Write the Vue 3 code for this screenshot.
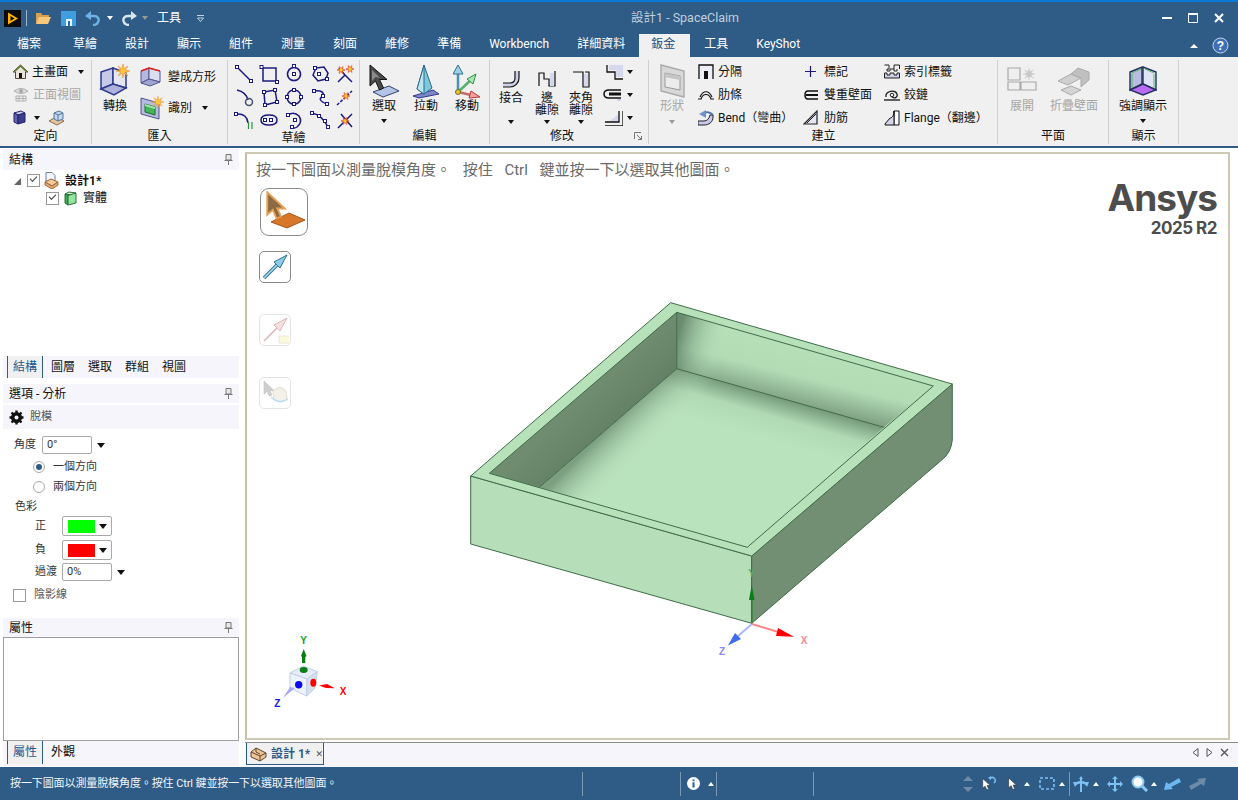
<script setup>
// ribbon tabs
const tabs = ['檔案', '草繪', '設計', '顯示', '組件', '測量', '刻面', '維修', '準備', 'Workbench', '詳細資料', '鈑金', '工具', 'KeyShot']

// star burst used on several ribbon icons
const burst = (cx, cy, r1, r2, n = 8) => {
  const pts = []
  for (let i = 0; i < n * 2; i++) {
    const r = i % 2 ? r2 : r1
    const a = (Math.PI * i) / n
    pts.push(`${(cx + r * Math.cos(a)).toFixed(1)},${(cy + r * Math.sin(a)).toFixed(1)}`)
  }
  return pts.join(' ')
}

// sketch tool grid, 20x20 boxes
const sketchTools = [
  { d: 'M3 3L17 17', pts: [[3, 3], [17, 17]] },
  { d: 'M4 4H17V17H4Z', pts: [[2.5, 3], [18, 18]] },
  { d: 'M10 3.5a6.5 6.5 0 1 0 .01 0', pts: [[10, 10], [10, 2]] },
  { d: 'M6 4L14 3L18 9L16 15L8 17L3 11Z', pts: [[9, 10], [17, 15], [5, 4]] },
  { d: 'M3 18L10 11L17 18M4 4L10 11', stroke: '#1a1a80', fire: [[6, 6], [15, 5]] },
  { d: 'M3 3Q12 5 14 13', pts: [], ring: [15, 15] },
  { d: 'M5 5L16 3L18 15L6 18Z', pts: [[5, 5], [16, 3], [18, 15], [6, 18]] },
  { d: 'M10 3a7 7 0 1 0 .01 0', pts: [[10, 3], [3, 10], [17, 10], [10, 17]] },
  { d: 'M4 4Q15 3 13 9Q6 13 17 17', pts: [[4, 4], [13, 9], [17, 17]] },
  { d: 'M2 18L17 4', dash: true, fire: [[11, 9]] },
  { d: 'M2 4Q13 3 14 13', pts: [[2, 4]], green: true },
  { d: 'M10 5c5 0 8 2 8 5s-3 5-8 5s-8-2-8-5s3-5 8-5Z', pts: [[6, 10], [12, 10]] },
  { d: 'M4 5Q10 1 15 6Q19 12 13 17Q10 19 8 17', pts: [[4, 5], [8, 17], [11, 10]] },
  { d: 'M2 3Q12 5 18 17', pts: [[2, 3], [9, 6], [15, 11], [18, 17]] },
  { d: 'M3 18L17 4M6 4L17 17', fire: [[10, 11]] },
]

const leftTabs = ['圖層', '選取', '群組', '視圖']
</script>

<template>
  <div class="app">
    <!-- shared shapes -->
    <svg class="defs" width="0" height="0">
      <defs>
        <symbol id="cursor" viewBox="0 0 20 24">
          <path d="M3 1V19L7.5 15L10.5 22L14 20.5L11 14H17Z" />
        </symbol>
        <linearGradient id="wallL" x1="0" x2="1" y1="0" y2="1">
          <stop offset="0" stop-color="#7d947d" />
          <stop offset="0.5" stop-color="#6f8c70" />
          <stop offset="1" stop-color="#4d6650" />
        </linearGradient>
        <linearGradient id="wallBack" gradientUnits="userSpaceOnUse" x1="786" y1="335" x2="770" y2="400">
          <stop offset="0" stop-color="#b6e0b8" />
          <stop offset="0.55" stop-color="#b3dcb5" />
          <stop offset="1" stop-color="#7d9e80" />
        </linearGradient>
        <linearGradient id="wallBackL" gradientUnits="userSpaceOnUse" x1="677" y1="340" x2="720" y2="352">
          <stop offset="0" stop-color="#52705a" stop-opacity="0.75" />
          <stop offset="1" stop-color="#b6e0b8" stop-opacity="0" />
        </linearGradient>
        <linearGradient id="floorShade" gradientUnits="userSpaceOnUse" x1="780" y1="398" x2="768" y2="440">
          <stop offset="0" stop-color="#769a7b" />
          <stop offset="0.45" stop-color="#b0dab3" />
          <stop offset="1" stop-color="#b9e3bc" />
        </linearGradient>
        <linearGradient id="floorShadeL" gradientUnits="userSpaceOnUse" x1="608" y1="428" x2="638" y2="458">
          <stop offset="0" stop-color="#6d8d72" stop-opacity="0.8" />
          <stop offset="1" stop-color="#b9e3bc" stop-opacity="0" />
        </linearGradient>
      </defs>
    </svg>

    <!-- title bar -->
    <header class="titlebar">
      <div class="quick">
        <svg class="logo" width="17" height="17" viewBox="0 0 17 17">
          <rect width="17" height="17" fill="#0c0c0c" />
          <path d="M4 2.5L14 8.5L4 14.5Z" fill="#ffb400" />
          <path d="M6.5 6V11L10.5 8.5Z" fill="#0c0c0c" />
        </svg>
        <span class="qsep"></span>
        <svg width="16" height="14" viewBox="0 0 16 14">
          <path d="M1 2H6L7.5 4H14V6H4L1 13Z" fill="#d99f4d" />
          <path d="M3.5 6H16L13 13H1Z" fill="#f6c67a" />
        </svg>
        <svg class="save" width="15" height="15" viewBox="0 0 15 15">
          <path d="M0 0H15V15H0Z" fill="#3f9ee0" />
          <path d="M5 8H11V15H5Z" fill="#e8f3fb" />
          <path d="M7 10H9V15H7Z" fill="#2c6fa8" />
        </svg>
        <svg class="undo" width="16" height="15" viewBox="0 0 16 15">
          <path d="M3 5H9C13 5 14 8 13.5 10C13 12 11 14 8 14" fill="none" stroke="#6db3e8" stroke-width="2.4" />
          <path d="M6 0V9L0 5Z" fill="#6db3e8" />
        </svg>
        <i class="caret white qcaret"></i>
        <svg class="redo" width="16" height="15" viewBox="0 0 16 15">
          <path d="M13 5H7C3 5 2 8 2.500 10C3 12 5 14 8 14" fill="none" stroke="#d8e4ee" stroke-width="2.400" />
          <path d="M10 0V9L16 5Z" fill="#d8e4ee" />
        </svg>
        <i class="caret grey qcaret2"></i>
        <span class="qtext">工具</span>
        <svg class="qmore" width="7" height="7" viewBox="0 0 7 7">
          <path d="M0 .5H7M.5 3L3.500 6.500L6.500 3Z" fill="none" stroke="#c6d2de" />
        </svg>
      </div>
      <div class="doc-title">設計1 - SpaceClaim</div>
      <div class="win">
        <svg width="10" height="10" viewBox="0 0 10 10"><path d="M0 5H10" stroke="#fff" stroke-width="2" /></svg>
        <svg width="10" height="10" viewBox="0 0 10 10"><path d="M.5 1.500H9.500V9.500H.5Z" fill="none" stroke="#fff" /><path d="M0 1H10" stroke="#fff" stroke-width="2" /></svg>
        <svg width="10" height="10" viewBox="0 0 10 10"><path d="M1 1L9 9M9 1L1 9" stroke="#fff" stroke-width="2" /></svg>
      </div>
    </header>

    <!-- tabs -->
    <nav class="tabs">
      <span v-for="t in tabs" :key="t" class="tab" :class="{ active: t === '鈑金', first: t === '檔案' }">{{ t }}</span>
      <div class="tab-tools">
        <i class="caret-up"></i>
        <svg width="17" height="17" viewBox="0 0 17 17">
          <circle cx="8.500" cy="8.500" r="7.500" fill="#3f6fb5" stroke="#c9d6e6" />
          <text x="8.500" y="13" text-anchor="middle" class="help">?</text>
        </svg>
      </div>
    </nav>

    <!-- ribbon -->
    <section class="ribbon">
      <div class="group g1">
        <div class="g-body col">
          <div class="srow">
            <svg width="15" height="15" viewBox="0 0 15 15">
              <path d="M7.500 1L0 8H2.500V14.500H12.500V8H15Z" fill="#e8e4d8" stroke="#5a4632" />
              <path d="M7.500 1L0 8H2L7.500 3L13 8H15Z" fill="#5b7a32" />
              <path d="M6 9H9V14H6Z" fill="#111" />
            </svg>
            <span class="t t-home">主畫面</span>
            <i class="caret c-home"></i>
          </div>
          <div class="srow dim">
            <svg width="16" height="15" viewBox="0 0 16 15">
              <path d="M1 4Q8 -1 15 4Q8 9 1 4Z" fill="#ddd" stroke="#b0b0b0" />
              <circle cx="8" cy="4" r="2" fill="#aaa" />
              <path d="M3 9H13V14H3ZM3 11.500H13M6 9V14M10 9V14" fill="none" stroke="#b0b0b0" />
            </svg>
            <span class="t">正面視圖</span>
          </div>
          <div class="srow">
            <svg width="13" height="15" viewBox="0 0 13 15">
              <path d="M1 3L8 1L12 3L5 5Z" fill="#c9cbeb" stroke="#23236e" />
              <path d="M1 3L5 5V14L1 12Z" fill="#6265ae" stroke="#23236e" />
              <path d="M5 5L12 3V12L5 14Z" fill="#3a3d8d" stroke="#23236e" />
            </svg>
            <i class="caret c-cube"></i>
            <svg class="view-ico" width="17" height="16" viewBox="0 0 17 16">
              <path d="M1 11L8 7L16 11L9 15Z" fill="#e7c79f" stroke="#8b6b46" />
              <path d="M6 3L11 1L15 3V9L10 11L6 9Z" fill="#c5d6ee" stroke="#54729c" />
              <path d="M6 3L10 5V11M10 5L15 3" fill="none" stroke="#54729c" />
            </svg>
          </div>
        </div>
        <div class="g-label">定向</div>
      </div>

      <div class="group g2">
        <div class="g-body">
          <div class="big b-convert">
            <svg class="b-ico" width="32" height="32" viewBox="0 0 32 32">
              <path d="M2 7L14 3V19L2 24Z" fill="#c6c9e8" stroke="#2e3a8e" stroke-width="1.500" />
              <path d="M14 3L27 8V23L14 19Z" fill="#e6e7f6" stroke="#2e3a8e" stroke-width="1.500" />
              <path d="M2 24L14 19L27 23L15 30Z" fill="#aeb2dc" stroke="#2e3a8e" stroke-width="1.500" />
              <polygon :points="burst(24, 6, 7, 2.500)" fill="#ffc83c" stroke="#e8801c" stroke-width=".5" />
            </svg>
            <span class="t">轉換</span>
          </div>
          <div class="col g2-col">
            <div class="srow h-square">
              <svg width="21" height="21" viewBox="0 0 21 21">
                <path d="M1 5L9 2V13L1 17Z" fill="#b4b8dc" stroke="#50558f" />
                <path d="M9 2L20 5V16L9 13Z" fill="#dcdef0" stroke="#50558f" />
                <path d="M1 17L9 13L20 16L10 20Z" fill="#a0a5d0" stroke="#50558f" />
                <path d="M1 5L9 2L20 5" fill="none" stroke="#e02020" stroke-width="1.400" />
              </svg>
              <span class="t">變成方形</span>
            </div>
            <div class="srow h-ident">
              <svg width="24" height="24" viewBox="0 0 24 24">
                <path d="M1 2L19 7V23L1 18Z" fill="#b7bbdc" stroke="#50558f" />
                <path d="M5 8L15 11V19L5 16Z" fill="#44b657" stroke="#1f6e2f" />
                <path d="M5 8L15 11V13L5 10Z" fill="#a4e6ae" />
                <polygon :points="burst(18, 6, 6, 2.200)" fill="#ffc83c" stroke="#e8801c" stroke-width=".4" />
              </svg>
              <span class="t">識別</span>
              <i class="caret c-ident"></i>
            </div>
          </div>
        </div>
        <div class="g-label">匯入</div>
      </div>

      <div class="group g3">
        <div class="g-body sketch-grid">
          <svg v-for="(s, i) in sketchTools" :key="i" width="20" height="20" viewBox="0 0 20 20">
            <path :d="s.d" fill="none" stroke="#1a1a80" stroke-width="1.500" :stroke-dasharray="s.dash ? '3 1.500' : null" />
            <circle v-if="s.ring" :cx="s.ring[0]" :cy="s.ring[1]" r="3.500" fill="none" stroke="#44506a" stroke-width="1.500" />
            <path v-if="s.green" d="M14.500 12V19M18 12V19" stroke="#2f8f4a" stroke-width="1.200" />
            <rect v-for="(p, j) in s.pts || []" :key="j" :x="p[0] - 1.500" :y="p[1] - 1.500" width="3" height="3" fill="#fff" stroke="#1a1a80" />
            <polygon v-for="(p, j) in s.fire || []" :key="'f' + j" :points="burst(p[0], p[1], 4, 1.600, 6)" fill="#ffcf2e" stroke="#e22a1a" stroke-width=".6" />
          </svg>
        </div>
        <div class="g-label">草繪</div>
      </div>

      <div class="group g4">
        <div class="g-body">
          <div class="big w-select">
            <svg class="b-ico" width="34" height="34" viewBox="0 0 34 34">
              <path d="M6 28L22 22L32 27L16 33Z" fill="#b4c4e4" stroke="#33416e" />
              <path d="M3 1V22L8.500 17L12.500 26L16.500 24L12.500 15.500H20Z" fill="#4a4a4a" stroke="#111" />
              <path d="M5 6V17L8.500 13L13 14Z" fill="#8c8c8c" />
            </svg>
            <span class="t">選取</span>
            <i class="caret c-below"></i>
          </div>
          <div class="big w-pull">
            <svg class="b-ico" width="30" height="34" viewBox="0 0 30 34">
              <path d="M2 32L22 26L28 30L8 34Z" fill="#7d88c8" stroke="#2e3a8e" />
              <path d="M13 1L21 24L13 30L6 25Z" fill="#7cc8dc" stroke="#2a6a8a" />
              <path d="M13 1L13 30L6 25Z" fill="#bce6ef" stroke="#2a6a8a" />
            </svg>
            <span class="t">拉動</span>
          </div>
          <div class="big w-move">
            <svg class="b-ico" width="28" height="34" viewBox="0 0 28 34">
              <path d="M5 28V8" stroke="#4d8fb5" stroke-width="2.500" />
              <path d="M5 1L10 10H0Z" fill="#9cd2e8" stroke="#2f6f92" />
              <path d="M5 28L19 15" stroke="#54b06a" stroke-width="2.500" />
              <path d="M23 10L20 20L14 15Z" fill="#a9e6b5" stroke="#2e8f48" />
              <path d="M5 28L18 31" stroke="#c86a6a" stroke-width="2.500" />
              <path d="M27 33L16 34L18 27Z" fill="#f0a0a0" stroke="#b63c3c" />
              <circle cx="5" cy="28" r="2.500" fill="#e8c43c" stroke="#7a6a14" />
            </svg>
            <span class="t">移動</span>
          </div>
        </div>
        <div class="g-label">編輯</div>
      </div>

      <div class="group g5">
        <div class="g-body">
          <div class="big mod m-join">
            <svg class="m-ico" width="20" height="20" viewBox="0 0 20 20">
              <path d="M2 18H9C14 18 18 14 18 9V2H14V9C14 12 12 14 9 14H2Z" fill="#cfd1ec" />
              <path d="M2 18H9C14 18 18 14 18 9V2M2 14H9C12 14 14 12 14 9V2" fill="none" stroke="#111" stroke-width="1.200" />
            </svg>
            <span class="t">接合</span>
            <i class="caret c-mod"></i>
          </div>
          <div class="big mod m-gap">
            <svg class="m-ico" width="18" height="20" viewBox="0 0 18 20">
              <path d="M1 17V4H6V10H11V17H17V2" fill="none" stroke="#111" stroke-width="1.200" />
              <path d="M12 4H16V17H12Z" fill="#d6d8f0" />
            </svg>
            <span class="t">邊<br />離隙</span>
            <i class="caret c-mod"></i>
          </div>
          <div class="big mod m-corner">
            <svg class="m-ico" width="18" height="20" viewBox="0 0 18 20">
              <path d="M1 3H11V18H17V3H13" fill="none" stroke="#111" stroke-width="1.200" />
              <path d="M12 5H16V17H12Z" fill="#d6d8f0" />
            </svg>
            <span class="t">夾角<br />離隙</span>
            <i class="caret c-mod"></i>
          </div>
          <div class="col m-col">
            <div class="srow m-row">
              <svg width="20" height="16" viewBox="0 0 20 16">
                <path d="M6 1H20V13H13V6H6Z" fill="#d6d8f0" />
                <path d="M4 1V8H12V15H20" fill="none" stroke="#111" stroke-width="1.300" />
              </svg>
              <i class="caret"></i>
            </div>
            <div class="srow m-row">
              <svg width="20" height="12" viewBox="0 0 20 12">
                <path d="M18 1H6C2 1 1 3 1 5C1 7 2 9 6 9H18" fill="none" stroke="#111" stroke-width="1.500" />
                <path d="M18 5H6" stroke="#111" stroke-width="3" />
                <path d="M14 10H18V12H14Z" fill="#cfd1ec" />
              </svg>
              <i class="caret"></i>
            </div>
            <div class="srow m-row">
              <svg width="20" height="16" viewBox="0 0 20 16">
                <path d="M5 12H16V4Z" fill="#d6d8f0" />
                <path d="M16 1V12H2M20 1V16H2" fill="none" stroke="#111" stroke-width="1.300" />
              </svg>
              <i class="caret"></i>
            </div>
          </div>
        </div>
        <div class="g-label m-label">修改
          <svg class="launcher" width="8" height="8" viewBox="0 0 8 8">
            <path d="M.5 7V.5H7M3 3L7.500 7.500M7.500 4V7.500H4" fill="none" stroke="#777" />
          </svg>
        </div>
      </div>

      <div class="group g6">
        <div class="g-body">
          <div class="big dim s-shape">
            <svg class="b-ico" width="25" height="34" viewBox="0 0 25 34">
              <path d="M1 1L24 7V33L1 27Z" fill="#d8d8d8" stroke="#aaa" stroke-width="1.400" />
              <path d="M5 9L20 12V26L5 23Z" fill="#ececec" stroke="#999" />
              <path d="M5 9L20 12V16L5 13Z" fill="#c4c4c4" />
            </svg>
            <span class="t">形狀</span>
            <i class="caret grey c-shape"></i>
          </div>
          <div class="col s-col1">
            <div class="srow">
              <svg width="16" height="15" viewBox="0 0 16 15">
                <path d="M2 2H14V14H2Z" fill="#eceef8" />
                <path d="M1 15V1H15V15" fill="none" stroke="#111" stroke-width="1.300" />
                <path d="M6 15V7H10V15Z" fill="#111" />
              </svg>
              <span class="t">分隔</span>
            </div>
            <div class="srow">
              <svg width="16" height="10" viewBox="0 0 16 10">
                <path d="M0 9H3C5 3 11 3 13 9H16M2 7C5 0 11 0 14 7" fill="none" stroke="#111" stroke-width="1.200" />
              </svg>
              <span class="t">肋條</span>
            </div>
            <div class="srow">
              <svg width="16" height="16" viewBox="0 0 16 16">
                <path d="M0 15H6C11 15 15 12 15 7V5H12C11 9 9 11 6 11H0Z" fill="#c8c9ee" stroke="#222" />
                <path d="M15 5C11 1 7 2 5 4" fill="none" stroke="#4f6ea8" stroke-width="2" />
                <path d="M1 4L8 0V8Z" fill="#6c93c8" />
              </svg>
              <span class="t">Bend（彎曲）</span>
            </div>
          </div>
          <div class="col s-col2">
            <div class="srow">
              <svg width="15" height="15" viewBox="0 0 15 15"><path d="M7.500 2V13M2 7.500H13" stroke="#1a1a80" stroke-width="1.200" /></svg>
              <span class="t">標記</span>
            </div>
            <div class="srow">
              <svg width="15" height="10" viewBox="0 0 15 10">
                <path d="M15 1H5C1 1 1 9 5 9H15" fill="none" stroke="#111" stroke-width="1.500" />
                <path d="M15 5H3" stroke="#111" stroke-width="2" />
              </svg>
              <span class="t">雙重壁面</span>
            </div>
            <div class="srow">
              <svg width="15" height="15" viewBox="0 0 15 15">
                <path d="M1 14L14 1V14Z" fill="#e6e7f4" stroke="#222" stroke-width="1.200" />
                <path d="M4 13L13 4" stroke="#222" />
              </svg>
              <span class="t">肋筋</span>
            </div>
          </div>
          <div class="col s-col3">
            <div class="srow">
              <svg width="16" height="15" viewBox="0 0 16 15">
                <path d="M.5 1H5V5H3V7H6V5M10 5V1H15.500V5M6 5H10V7H13V5" fill="none" stroke="#222" />
                <path d="M.5 14V9H3V11H6V9H10V11H13V9H15.500V14Z" fill="#cfd0ea" stroke="#222" />
              </svg>
              <span class="t">索引標籤</span>
            </div>
            <div class="srow">
              <svg width="16" height="12" viewBox="0 0 16 12">
                <path d="M2 8C1 2 11 0 13 5C14 8 11 10 8 8" fill="none" stroke="#222" stroke-width="1.300" />
                <circle cx="8" cy="6" r="1.800" fill="none" stroke="#222" />
                <path d="M0 11H16" stroke="#222" stroke-width="1.400" />
              </svg>
              <span class="t">鉸鏈</span>
            </div>
            <div class="srow">
              <svg width="16" height="16" viewBox="0 0 16 16">
                <path d="M10 1H15V15H10Z" fill="#fff" stroke="#111" />
                <path d="M10 1C10 8 6 8 6 8L1 14V15H10Z" fill="#d4d5ea" stroke="#111" />
              </svg>
              <span class="t">Flange（翻邊）</span>
            </div>
          </div>
        </div>
        <div class="g-label s-label">建立</div>
      </div>

      <div class="group g7">
        <div class="g-body">
          <div class="big dim f-open">
            <svg class="b-ico" width="30" height="30" viewBox="0 0 30 30">
              <path d="M1 2H13V14H1ZM1 16H13V24H1ZM14 16H29V24H14Z" fill="#efefef" stroke="#a8a8a8" stroke-width="1.200" />
              <polygon :points="burst(22, 8, 7, 2.500)" fill="#c8c8c8" />
            </svg>
            <span class="t">展開</span>
          </div>
          <div class="big dim f-fold">
            <svg class="b-ico" width="34" height="30" viewBox="0 0 34 30">
              <path d="M1 15L14 8L24 12L11 19Z" fill="#d0d0d0" stroke="#aaa" />
              <path d="M14 8L21 2L32 6V14L24 21V12Z" fill="#c0c0c0" stroke="#aaa" />
              <path d="M4 24L14 20L24 24L14 29Z" fill="#d4d4d4" stroke="#aaa" />
            </svg>
            <span class="t">折疊壁面</span>
          </div>
        </div>
        <div class="g-label">平面</div>
      </div>

      <div class="group g8">
        <div class="g-body">
          <div class="big h-show">
            <svg class="b-ico" width="28" height="30" viewBox="0 0 28 30">
              <path d="M1 6L13 1V18L1 24Z" fill="#b8bce0" stroke="#20305e" stroke-width="1.400" />
              <path d="M14 1L27 6V24L14 18Z" fill="#e0e2f6" stroke="#20305e" stroke-width="1.400" />
              <path d="M1 24L14 18L27 24L14 29Z" fill="#b96cf0" stroke="#20305e" stroke-width="1.400" />
              <path d="M3 7L12 3M16 3L25 7M3 22L3 8M25 22V8" fill="none" stroke="#5cb85c" />
            </svg>
            <span class="t">強調顯示</span>
            <i class="caret c-below"></i>
          </div>
        </div>
        <div class="g-label">顯示</div>
      </div>
    </section>

    <main class="main">
      <aside class="side">
        <div class="p-head h21">結構<svg class="pin" width="9" height="11" viewBox="0 0 9 11"><path d="M2 .5H7V6H2ZM.5 6.500H8.500M4.500 7V11" fill="#e8e8e8" stroke="#777" /></svg></div>
        <div class="tree">
          <div class="t-row r1">
            <i class="tri"></i>
            <i class="chk on"></i>
            <svg class="doc" width="15" height="17" viewBox="0 0 15 17">
              <path d="M2 .5H8L11 3.500V9H2Z" fill="#f4f6fb" stroke="#6b7fa6" />
              <path d="M1 10L7 7L14 10L8 14Z" fill="#f1c99b" stroke="#9c6b3a" />
              <path d="M1 10V13L8 17L14 13V10L8 14Z" fill="#e0a871" stroke="#9c6b3a" />
            </svg>
            <b>設計1*</b>
          </div>
          <div class="t-row r2">
            <i class="chk on"></i>
            <svg class="solid" width="13" height="15" viewBox="0 0 13 15">
              <path d="M1 3L5 1L12 2L8 4Z" fill="#c8f5cc" stroke="#2e6a3a" />
              <path d="M1 3L4 4.500V14L1 12Z" fill="#3fae58" stroke="#2e6a3a" />
              <path d="M4 4.500L12 2V12L4 14Z" fill="#8fe69c" stroke="#2e6a3a" />
            </svg>
            <span>實體</span>
          </div>
        </div>
        <div class="s-tabs h22">
          <span class="s-tab active">結構</span>
          <span v-for="t in leftTabs" :key="t" class="s-tab">{{ t }}</span>
        </div>
        <div class="p-head h19 mt6">選項 - 分析<svg class="pin" width="9" height="11" viewBox="0 0 9 11"><path d="M2 .5H7V6H2ZM.5 6.500H8.500M4.500 7V11" fill="#e8e8e8" stroke="#777" /></svg></div>
        <div class="tool-head">
          <svg width="15" height="15" viewBox="0 0 15 15">
            <circle cx="7.500" cy="7.500" r="4" fill="none" stroke="#111" stroke-width="3" />
            <path d="M7.500 .5V14.500M.5 7.500H14.500M2.500 2.500L12.500 12.500M12.500 2.500L2.500 12.500" stroke="#111" stroke-width="2.400" />
            <circle cx="7.500" cy="7.500" r="2" fill="#f5f5fb" />
          </svg>
          <span>脫模</span>
        </div>
        <div class="form">
          <div class="f-row angle">
            <span class="f-l">角度</span>
            <span class="inp">0°</span>
            <i class="caret big-caret"></i>
          </div>
          <div class="f-radio first-radio"><i class="radio on"></i>一個方向</div>
          <div class="f-radio"><i class="radio"></i>兩個方向</div>
          <div class="f-title">色彩</div>
          <div class="f-row color first-color">
            <span class="f-l2">正</span>
            <span class="swatch"><i class="sw green"></i><i class="caret big-caret"></i></span>
          </div>
          <div class="f-row color second-color">
            <span class="f-l2">負</span>
            <span class="swatch"><i class="sw red"></i><i class="caret big-caret"></i></span>
          </div>
          <div class="f-row color">
            <span class="f-l2">過渡</span>
            <span class="inp">0%</span>
            <i class="caret big-caret"></i>
          </div>
          <div class="f-check"><i class="chk"></i>陰影線</div>
        </div>
        <div class="p-head h19">屬性<svg class="pin" width="9" height="11" viewBox="0 0 9 11"><path d="M2 .5H7V6H2ZM.5 6.500H8.500M4.500 7V11" fill="#e8e8e8" stroke="#777" /></svg></div>
        <div class="prop-box"></div>
        <div class="s-tabs h25">
          <span class="s-tab active">屬性</span>
          <span class="s-tab">外觀</span>
        </div>
      </aside>

      <div class="work">
        <div class="viewport">
          <svg class="scene" viewBox="247 154 981 584">
            <!-- body -->
            <path d="M470.700 476L751.700 556V623.300L470.700 544Z" fill="#b6deb8" stroke="#3f6b49" />
            <path d="M751.700 556L952.300 384V440Q951 453 941.700 460L751.700 623.300Z" fill="#738f73" stroke="#3f6b49" />
            <path d="M470.700 476L670.700 302.700L952.300 384L751.700 556Z" fill="#b7e2b9" stroke="#3f6b49" />
            <path d="M489.300 473.300L676.700 312.300V368.700L539.300 487.300Z" fill="url(#wallL)" />
            <path d="M676.700 312.300L933.300 386L884 427.300L676.700 368.700Z" fill="url(#wallBack)" />
            <path d="M676.700 312.300L933.300 386L884 427.300L676.700 368.700Z" fill="url(#wallBackL)" />
            <path d="M676.700 368.700L884 427.300L747.300 547.300L539.300 487.300Z" fill="url(#floorShade)" />
            <path d="M676.700 368.700L884 427.300L747.300 547.300L539.300 487.300Z" fill="url(#floorShadeL)" />
            <path d="M489.300 473.300L676.700 312.300L933.300 386L747.300 547.300Z" fill="none" stroke="#3f6b49" />
            <path d="M676.700 312.300V368.700L884 427.300M676.700 368.700L539.300 487.300" fill="none" stroke="#3f6b49" />

            <!-- model triad -->
            <path d="M751.700 624V598" stroke="#1f8a2c" stroke-width="1.500" />
            <path d="M751.700 585L754.500 600H749Z" fill="#0b7d16" />
            <text x="751.700" y="577" class="ax" fill="#5aa866" text-anchor="middle">Y</text>
            <path d="M752 624L778 632" stroke="#ff8585" stroke-width="2" />
            <path d="M794 636.700L776 636L778 628Z" fill="#f00" />
            <text x="804" y="644" class="ax" fill="#ff8a8a" text-anchor="middle">X</text>
            <path d="M752 624L738 636" stroke="#a8b8f4" stroke-width="2" />
            <path d="M728 645.500L735 633L741 639Z" fill="#3e6cf0" />
            <text x="722" y="655" class="ax" fill="#8a8af8" text-anchor="middle">Z</text>

            <!-- corner triad -->
            <path d="M303.700 649L306.500 656L305.300 657V663H302V657L301 656Z" fill="#0b7d16" />
            <text x="303.700" y="644" class="ax" fill="#1a9a2a" text-anchor="middle">Y</text>
            <path d="M290 673L303 666L317.300 671.700L307 679Z" fill="#e6ecf8" stroke="#c0cfe6" />
            <path d="M290 673L307 679L306.700 696L290 688Z" fill="#edf2fb" stroke="#c0cfe6" />
            <path d="M307 679L317.300 671.700L315 688L306.700 696Z" fill="#d8e0f0" stroke="#c0cfe6" />
            <ellipse cx="303.700" cy="670" rx="4" ry="3" fill="#0b7d16" />
            <circle cx="298.700" cy="684.700" r="3.700" fill="#0a0aee" />
            <ellipse cx="313.300" cy="682.700" rx="3" ry="4" fill="#f00" />
            <path d="M319 685.500L327 684L335 688.300L326 688Z" fill="#f00" />
            <text x="343" y="695" class="ax" fill="#f00" text-anchor="middle">X</text>
            <path d="M295 688L283 698L290 687Z" fill="#a8a8f4" />
            <text x="277.300" y="707" class="ax" fill="#1a1aee" text-anchor="middle">Z</text>
          </svg>

          <div class="hint">按一下圖面以測量脫模角度。 按住 Ctrl 鍵並按一下以選取其他圖面。</div>

          <div class="brand">
            <div class="brand-name">Ansys</div>
            <div class="brand-ver">2025 R2</div>
          </div>

          <div class="palette">
            <button class="pbtn large">
              <svg width="42" height="42" viewBox="0 0 42 42">
                <path d="M10 33L28 24L44 31L26 39Z" fill="#d8762a" stroke="#a85a1c" transform="translate(-2 -2)" />
                <use href="#cursor" x="0" y="0" width="26" height="30" fill="#8a6a44" stroke="#e8a050" stroke-width="1.500" />
              </svg>
            </button>
            <button class="pbtn">
              <svg width="28" height="28" viewBox="0 0 28 28">
                <path d="M3 25L16 12" stroke="#2f6f92" stroke-width="3.500" />
                <path d="M3 25L16 12" stroke="#a8dcef" stroke-width="1.600" />
                <path d="M26 2L19 15L16.500 12.500L13 9Z" fill="#8ccbe6" stroke="#2f6f92" />
              </svg>
            </button>
            <button class="pbtn faint">
              <svg width="28" height="28" viewBox="0 0 28 28">
                <path d="M3 25L16 12" stroke="#d8b8b8" stroke-width="1.600" />
                <path d="M26 2L19 15L16.500 12.500L13 9Z" fill="#f6e0e0" stroke="#dcb8b8" />
                <path d="M18 20H29V27H18Z" fill="#fbf8dc" stroke="#e8e8d8" />
              </svg>
            </button>
            <button class="pbtn faint">
              <svg width="28" height="28" viewBox="0 0 28 28">
                <use href="#cursor" x="1" y="1" width="14" height="18" fill="#cfcfcf" stroke="#bbb" />
                <path d="M12 12Q19 5 25 12L26 20Q19 26 13 20Z" fill="#f4f1ea" stroke="#e0dcd0" />
                <path d="M10 18Q18 26 27 20" fill="none" stroke="#bcdcf2" stroke-width="1.500" />
              </svg>
            </button>
          </div>
        </div>

        <div class="doc-tabs">
          <div class="doc-tab">
            <svg width="17" height="16" viewBox="0 0 17 16">
              <path d="M1 6L6 2L16 7V11L10 15L1 11Z" fill="#eec396" stroke="#5c4630" />
              <path d="M1 6L10 10V15M10 10L16 7M6 2V6L10 8" fill="none" stroke="#5c4630" />
            </svg>
            <span class="doc-name">設計 1*</span>
            <span class="doc-x">✕</span>
          </div>
          <div class="doc-nav">
            <svg width="7" height="9" viewBox="0 0 7 9"><path d="M6 .5V8.500L1 4.500Z" fill="none" stroke="#555" /></svg>
            <svg width="7" height="9" viewBox="0 0 7 9"><path d="M1 .5V8.500L6 4.500Z" fill="none" stroke="#555" /></svg>
            <svg width="9" height="9" viewBox="0 0 9 9"><path d="M1 1L8 8M8 1L1 8" stroke="#555" stroke-width="1.300" /></svg>
          </div>
        </div>
      </div>
    </main>

    <!-- status bar -->
    <footer class="status">
      <div class="st-msg">按一下圖面以測量脫模角度。按住 Ctrl 鍵並按一下以選取其他圖面。</div>
      <div class="st-cell c1"></div>
      <div class="st-cell c2">
        <svg width="13" height="13" viewBox="0 0 13 13">
          <circle cx="6.500" cy="6.500" r="6.500" fill="#fff" />
          <path d="M5.500 2.500H7.500V4.200H5.500ZM5.500 5.300H7.500V10.500H5.500Z" fill="#1c5f9e" />
        </svg>
        <i class="caret-up small"></i>
      </div>
      <div class="st-cell c3"></div>
      <div class="st-cell c4"></div>
      <div class="st-tools">
        <svg class="updown" width="10" height="16" viewBox="0 0 10 16">
          <path d="M5 0L10 5H0ZM5 16L10 11H0Z" fill="#6e8aa6" />
        </svg>
        <svg width="16" height="15" viewBox="0 0 16 15">
          <use href="#cursor" x="0" y="2" width="11" height="13" fill="#fff" stroke="#222" />
          <path d="M9 2C13 0 16 4 13 7" fill="none" stroke="#7cc0f4" stroke-width="1.500" />
          <path d="M7 2L10 0V4Z" fill="#7cc0f4" />
        </svg>
        <svg class="cur" width="11" height="14" viewBox="0 0 11 14">
          <use href="#cursor" x="0" y="0" width="11" height="14" fill="#fff" stroke="#222" />
        </svg>
        <i class="caret-up small up-cur"></i>
        <svg class="sel" width="16" height="13" viewBox="0 0 16 13">
          <rect x="1" y="1" width="14" height="11" fill="none" stroke="#7cc0f4" stroke-width="1.600" stroke-dasharray="3 2" />
        </svg>
        <i class="caret-up small up-sel"></i>
        <span class="st-sep"></span>
        <svg width="16" height="16" viewBox="0 0 16 16">
          <path d="M7 2H9V16H7Z" fill="#7cc0f4" />
          <path d="M2 10Q2 5 8 5Q14 5 14 10L11 8Q8 7 5 8Z" fill="#7cc0f4" />
          <path d="M0 6L5 6L2 11ZM16 6L11 6L14 11ZM8 0L10 3H6Z" fill="#7cc0f4" />
        </svg>
        <i class="caret-up small up-rot"></i>
        <svg class="pan" width="16" height="16" viewBox="0 0 16 16">
          <path d="M7 3H9V7H13V5L16 8L13 11V9H9V13H11L8 16L5 13H7V9H3V11L0 8L3 5V7H7V3H5L8 0L11 3H9Z" fill="#7cc0f4" />
        </svg>
        <svg class="zoom" width="17" height="17" viewBox="0 0 17 17">
          <circle cx="7" cy="7" r="5.500" fill="#fff" stroke="#8ccaf6" stroke-width="2" />
          <path d="M11 11L16 16" stroke="#8ccaf6" stroke-width="3" />
        </svg>
        <i class="caret-up small up-zoom"></i>
        <svg class="prev" width="17" height="12" viewBox="0 0 17 12">
          <path d="M0 12L2 4L5 6L15 0L17 4L7 9L9 11Z" fill="#6db8f2" />
        </svg>
        <svg class="next" width="17" height="12" viewBox="0 0 17 12">
          <path d="M17 0L15 8L12 6L2 12L0 8L10 3L8 1Z" fill="#6e8aa6" />
        </svg>
      </div>
    </footer>
  </div>
</template>

<style>
html, body { margin: 0; background: #fff; }
</style>

<style scoped>
.app {
  width: 1238px;
  height: 800px;
  display: flex;
  flex-direction: column;
  overflow: hidden;
  font-family: Roboto, "Noto Sans CJK TC", sans-serif;
  font-size: 12px;
  line-height: 14px;
  color: #111;
  background: #fff;
}
.defs { position: absolute; }
i { display: block; font-style: normal; flex: none; }
svg { display: block; flex: none; }

.caret { width: 0; height: 0; border-left: 3.5px solid transparent; border-right: 3.5px solid transparent; border-top: 4px solid #111; }
.caret.white { border-top-color: #fff; }
.caret.grey { border-top-color: #9a9a9a; }
.caret.big-caret { border-left-width: 4px; border-right-width: 4px; border-top-width: 5px; }
.caret-up { width: 0; height: 0; border-left: 4px solid transparent; border-right: 4px solid transparent; border-bottom: 4px solid #fff; }
.caret-up.small { border-left-width: 3.5px; border-right-width: 3.5px; }

/* title */
.titlebar {
  height: 34px;
  box-sizing: border-box;
  border-top: 2px solid #0a78d4;
  background: #2e5c86;
  display: flex;
  align-items: center;
  color: #fff;
}
.quick { display: flex; align-items: center; padding-left: 4px; width: 624px; box-sizing: border-box; height: 100%; }
.qsep { width: 1px; height: 16px; background: #9db4c9; margin: 0 8px 0 5px; }
.save { margin-left: 10px; }
.undo { margin-left: 9px; }
.qcaret { margin-left: 6px; }
.redo { margin-left: 8px; }
.qcaret2 { margin-left: 5px; }
.qtext { font-size: 12px; margin-left: 9px; }
.qmore { margin-left: 16px; }
.doc-title { margin-left: 7px; font-size: 12.5px; color: #c3cfdb; }
.win { margin-left: auto; display: flex; gap: 16px; padding-right: 14px; }

/* tabs */
.tabs { height: 23px; background: #2e5c86; display: flex; align-items: center; color: #fff; padding-left: 3px; }
.tab { padding: 0 14px; height: 23px; line-height: 20px; font-size: 12px; white-space: nowrap; }
.tab.first { padding-right: 18px; }
.tab.active { background: #f0f0f0; color: #1d4e7a; padding: 0 15px 0 12px; }
.tab-tools { margin-left: auto; display: flex; align-items: center; gap: 14px; padding-right: 9px; }

/* ribbon */
.ribbon { height: 91px; box-sizing: border-box; background: #f0f0f0; border-bottom: 2px solid #2e5c86; display: flex; flex: none; }
.group { height: 84px; margin-top: 3px; box-sizing: border-box; border-right: 1px solid #cfcfcf; display: flex; flex-direction: column; position: relative; }
.g-body { height: 68px; display: flex; flex: none; }
.g-label { height: 16px; line-height: 16px; text-align: center; font-size: 12px; }
.g1 { width: 92px; }
.g2 { width: 136px; }
.g3 { width: 132px; }
.g4 { width: 130px; }
.g5 { width: 159px; }
.g6 { width: 349px; }
.g7 { width: 111px; }
.g8 { width: 70px; }
.col { display: flex; flex-direction: column; }
.srow { height: 23px; display: flex; align-items: center; white-space: nowrap; flex: none; }
.t { white-space: nowrap; }
.dim { color: #a6a6a6; }
.big { display: flex; flex-direction: column; align-items: center; text-align: center; flex: none; }
.b-ico { margin-top: 3px; height: 36px; }
.big > .t { line-height: 14px; }
.c-below { margin-top: 6px; }

.g1 .col { padding-left: 13px; }
.g1 .t { margin-left: 4px; }
.c-home { margin-left: 10px; }
.c-cube { margin-left: 8px; }
.view-ico { margin-left: 8px; }

.b-convert { width: 46px; }
.g2-col { margin-left: 2px; padding-top: 4px; }
.h-square { height: 25px; }
.h-square .t { margin-left: 7px; }
.h-ident { height: 24px; margin-top: 7px; }
.h-ident .t { margin-left: 4px; }
.c-ident { margin-left: 10px; }

.sketch-grid { display: grid; grid-template-columns: repeat(5, 20px); grid-auto-rows: 23px; column-gap: 5.2px; padding: 2px 0 0 6px; align-items: center; }

.w-select { width: 42px; margin-left: 3px; }
.w-pull { width: 40px; margin-left: 1px; }
.w-move { width: 40px; margin-left: 1px; }

.mod { width: 36px; height: 68px; }
.mod .t { line-height: 12px; }
.m-ico { margin-top: 9px; margin-bottom: 3px; }
.c-mod { position: absolute; top: 60px; }
.m-join { margin-left: 3px; }
.m-corner { margin-left: -2px; }
.m-col { margin-left: 4px; }
.m-row { gap: 4px; width: 34px; justify-content: flex-start; }
.m-label { position: relative; padding-right: 14px; }
.launcher { position: absolute; right: 6px; top: 4px; }

.s-shape { width: 40px; margin-left: 3px; }
.c-shape { position: absolute; top: 60px; }
.s-col1 { margin-left: 6px; width: 105px; }
.s-col1 .srow { gap: 4px; }
.s-col1 svg { width: 16px; }
.s-col2 { width: 81px; }
.s-col2 .srow { gap: 6px; }
.s-col3 .srow { gap: 4px; }
.s-label { padding-left: 1px; }

.f-open { width: 40px; margin-left: 4px; }
.f-fold { width: 56px; margin-left: 4px; }
.h-show { width: 56px; margin-left: 6px; }

/* left side */
.main { flex: 1; display: flex; min-height: 0; }
.side { width: 245px; padding-top: 1px; padding-left: 3px; box-sizing: border-box; display: flex; flex-direction: column; flex: none; }
.p-head { width: 236px; box-sizing: border-box; padding-left: 6px; background: #f5f5fb; display: flex; align-items: center; justify-content: space-between; padding-right: 6px; flex: none; }
.h21 { height: 21px; }
.h19 { height: 19px; }
.mt6 { margin-top: 6px; }
.tree { height: 186px; flex: none; position: relative; padding-top: 1px; box-sizing: border-box; }
.t-row { display: flex; align-items: center; }
.r1 { height: 19px; padding-left: 11px; }
.r2 { height: 16px; padding-left: 43px; }
.tri { width: 0; height: 0; border-left: 7px solid transparent; border-bottom: 7px solid #666; margin-right: 6px; margin-top: 1px; }
.chk { width: 11px; height: 11px; border: 1px solid #999; background: #fff; position: relative; flex: none; }
.chk.on::after { content: ""; position: absolute; left: 2px; top: 1px; width: 6px; height: 3px; border-left: 1.2px solid #444; border-bottom: 1.2px solid #444; transform: rotate(-45deg); }
.doc { margin-left: 4px; margin-right: 6px; }
.solid { margin-left: 5px; margin-right: 6px; }
.r1 b { font-size: 12px; }
.s-tabs { flex: none; display: flex; align-items: center; width: 236px; box-sizing: border-box; background: #f5f5fb; padding-left: 4px; }
.h22 { height: 22px; }
.h25 { height: 25px; align-items: flex-start; }
.s-tab { padding: 0 7px; margin-right: 8px; line-height: 22px; height: 22px; box-sizing: border-box; }
.s-tab.active { border-left: 1px solid #2e5c86; border-right: 1px solid #2e5c86; color: #1d5a8e; background: #f0f0f0; padding: 0 5px; margin-right: 7px; width: 36px; }
.h22 .s-tab { margin-right: 1px; padding: 0 6px; }
.h22 .s-tab.active { padding: 0 5px; margin-right: 2px; }
.h25 .s-tab.active { height: 23px; margin-right: 1px; }
.tool-head { flex: none; margin-top: 2px; height: 24px; width: 236px; background: #f5f5fb; display: flex; align-items: center; padding-left: 6px; box-sizing: border-box; gap: 6px; font-size: 11px; color: #555; }
.form { height: 189px; flex: none; font-size: 11px; color: #333; box-sizing: border-box; padding-top: 7px; }
.f-row { display: flex; align-items: center; }
.angle { height: 18px; padding-left: 11px; }
.f-l { width: 28px; }
.inp { width: 50px; height: 18px; box-sizing: border-box; border: 1px solid #aaa; border-radius: 2px; background: #fff; line-height: 16px; padding-left: 4px; margin-right: 5px; }
.f-radio { height: 20px; padding-left: 30px; display: flex; align-items: center; gap: 8px; }
.first-radio { margin-top: 3px; }
.radio { width: 10px; height: 10px; border: 1px solid #aaa; border-radius: 50%; position: relative; }
.radio.on::after { content: ""; position: absolute; left: 2px; top: 2px; width: 6px; height: 6px; background: #2e5c86; border-radius: 50%; }
.f-title { height: 20px; line-height: 20px; padding-left: 12px; }
.color { margin-top: 3px; padding-left: 32px; min-height: 18px; }
.first-color { margin-top: -1px; }
.second-color { margin-top: 4px; }
.f-l2 { width: 27px; }
.swatch { width: 50px; height: 20px; box-sizing: border-box; border: 1px solid #aaa; border-radius: 2px; display: flex; align-items: center; padding-left: 5px; gap: 4px; background: #fff; }
.sw { width: 27px; height: 13px; }
.sw.green { background: #0f0; }
.sw.red { background: #f00; }
.f-check { margin-top: 5px; height: 18px; padding-left: 10px; display: flex; align-items: center; gap: 8px; color: #555; }
.prop-box { height: 104px; width: 236px; box-sizing: border-box; border: 1px solid #a0a0a0; flex: none; }

/* work area */
.work { flex: 1; display: flex; flex-direction: column; padding-top: 4px; min-width: 0; }
.viewport { width: 985px; height: 588px; box-sizing: border-box; border: 2px solid #cdc9b2; border-left-color: #c4c0a8; position: relative; overflow: hidden; flex: none; background: #fff; }
.scene { position: absolute; inset: 0; width: 981px; height: 584px; }
.ax { font-size: 10px; font-weight: 700; font-family: "Liberation Sans", sans-serif; }
.hint { position: absolute; left: 9px; top: 7px; font-size: 15px; line-height: 18px; color: #6a6a6a; white-space: nowrap; word-spacing: 8px; }
.brand { position: absolute; right: 11px; top: 24px; text-align: right; color: #4d4d4d; font-family: Inter, sans-serif; font-weight: 700; }
.brand-name { font-size: 37px; line-height: 40px; letter-spacing: -1px; }
.brand-ver { font-size: 17px; line-height: 20px; letter-spacing: -.5px; }
.palette { position: absolute; left: 12px; top: 34px; display: flex; flex-direction: column; gap: 31px; align-items: flex-start; }
.pbtn { width: 32px; height: 32px; padding: 0; box-sizing: border-box; border: 1px solid #8a8a8a; border-radius: 5px; background: #fff; display: flex; align-items: center; justify-content: center; }
.pbtn.large { width: 48px; height: 48px; border-radius: 9px; margin-left: 1px; margin-bottom: -16px; }
.pbtn.faint { border-color: #e4e4e4; }

.doc-tabs { margin-top: 2px; flex: 1; background: #f5f5fb; border-top: 1px solid #8c8c8c; display: flex; justify-content: space-between; align-items: flex-start; padding-right: 8px; }
.doc-tab { width: 78px; height: 22px; margin-left: 1px; box-sizing: border-box; border: 1px solid #2e5c86; border-top: 0; display: flex; align-items: center; padding-left: 3px; background: #f0f0f0; }
.doc-name { margin-left: 4px; font-weight: 700; color: #2e5c86; width: 40px; white-space: nowrap; }
.doc-x { margin-left: 5px; font-size: 9px; color: #555; font-family: "DejaVu Sans", sans-serif; }
.doc-nav { display: flex; align-items: center; gap: 7px; padding-top: 5px; width: 38px; }

/* status */
.status { height: 33px; background: #2e5c86; color: #f2f5f8; display: flex; align-items: center; flex: none; }
.st-msg { width: 582px; box-sizing: border-box; padding-left: 10px; font-size: 11px; letter-spacing: -.1px; white-space: nowrap; }
.st-cell { height: 24px; border-left: 1px solid #7d9ab4; box-sizing: border-box; display: flex; align-items: center; flex: none; }
.c1 { width: 98px; }
.c2 { width: 36px; padding-left: 6px; gap: 8px; }
.c3 { width: 97px; }
.c4 { width: 150px; }
.st-tools { display: flex; align-items: center; }
.updown { margin-right: 8px; }
.cur { margin-left: 10px; }
.up-cur { margin-left: 6px; }
.sel { margin-left: 9px; }
.up-sel { margin-left: 4px; }
.st-sep { width: 1px; height: 24px; background: #7d9ab4; margin: 0 3px 0 4px; }
.up-rot { margin-left: 4px; }
.pan { margin-left: 8px; }
.zoom { margin-left: 8px; }
.up-zoom { margin-left: 3px; }
.prev { margin-left: 7px; }
.next { margin-left: 8px; }
.help { font-size: 12px; font-weight: 700; fill: #fff; font-family: "Liberation Sans", sans-serif; }
</style>
